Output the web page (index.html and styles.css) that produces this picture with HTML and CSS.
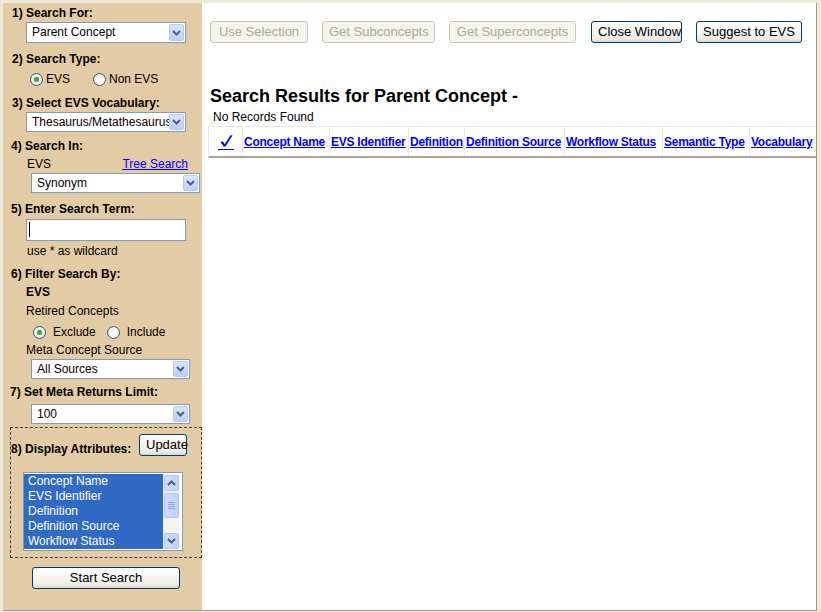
FILE: index.html
```html
<!DOCTYPE html>
<html>
<head>
<meta charset="utf-8">
<title>EVS Search</title>
<link rel="stylesheet" href="styles.css">
</head>
<body>
<div class="frame">
  <aside class="side">
    <div class="lbl lbl-a first">1) Search For:</div>
    <div class="sel sel-a gap2"><span class="sel-text">Parent Concept</span><span class="dd"><svg width="9" height="6" viewBox="0 0 9 6"><path d="M1 1 L4.5 4.5 L8 1" fill="none" stroke="#4d6185" stroke-width="2"/></svg></span></div>

    <div class="lbl lbl-a gap9">2) Search Type:</div>
    <div class="radios radios-1">
      <span class="radio on"></span><span class="rtext">EVS</span>
      <span class="radio r-second"></span><span class="rtext">Non EVS</span>
    </div>

    <div class="lbl lbl-a gap10">3) Select EVS Vocabulary:</div>
    <div class="sel sel-a gap2 h20"><span class="sel-text">Thesaurus/Metathesaurus</span><span class="dd"><svg width="9" height="6" viewBox="0 0 9 6"><path d="M1 1 L4.5 4.5 L8 1" fill="none" stroke="#4d6185" stroke-width="2"/></svg></span></div>

    <div class="lbl lbl-b gap7">4) Search In:</div>
    <div class="inrow">
      <span>EVS</span>
      <a class="link" href="#">Tree Search</a>
    </div>
    <div class="sel sel-c gap2 h20"><span class="sel-text">Synonym</span><span class="dd"><svg width="9" height="6" viewBox="0 0 9 6"><path d="M1 1 L4.5 4.5 L8 1" fill="none" stroke="#4d6185" stroke-width="2"/></svg></span></div>

    <div class="lbl lbl-b gap9">5) Enter Search Term:</div>
    <div class="input"><span class="caret"></span></div>
    <div class="hint">use * as wildcard</div>

    <div class="lbl lbl-b gap9">6) Filter Search By:</div>
    <div class="lbl sub gap4">EVS</div>
    <div class="plain gap5">Retired Concepts</div>
    <div class="radios radios-2">
      <span class="radio on"></span><span class="rtext">Exclude</span>
      <span class="radio r-second2"></span><span class="rtext">Include</span>
    </div>
    <div class="plain gap4">Meta Concept Source</div>
    <div class="sel sel-d gap2 h20"><span class="sel-text">All Sources</span><span class="dd"><svg width="9" height="6" viewBox="0 0 9 6"><path d="M1 1 L4.5 4.5 L8 1" fill="none" stroke="#4d6185" stroke-width="2"/></svg></span></div>

    <div class="lbl lbl-c gap6">7) Set Meta Returns Limit:</div>
    <div class="sel sel-d gap5 h20"><span class="sel-text">100</span><span class="dd"><svg width="9" height="6" viewBox="0 0 9 6"><path d="M1 1 L4.5 4.5 L8 1" fill="none" stroke="#4d6185" stroke-width="2"/></svg></span></div>

    <div class="attrs">
      <div class="attrs-head">
        <span class="lbl attrs-lbl">8) Display Attributes:</span>
        <button class="btn btn-update">Update</button>
      </div>
      <div class="listbox">
        <div class="items">
          <div class="item">Concept Name</div>
          <div class="item">EVS Identifier</div>
          <div class="item">Definition</div>
          <div class="item">Definition Source</div>
          <div class="item">Workflow Status</div>
        </div>
        <div class="sb">
          <span class="sb-btn"><svg width="9" height="6" viewBox="0 0 9 6"><path d="M1 5 L4.5 1.5 L8 5" fill="none" stroke="#4d6185" stroke-width="2"/></svg></span>
          <span class="sb-thumb"><span class="grip"></span><span class="grip"></span><span class="grip"></span><span class="grip"></span></span>
          <span class="sb-track"></span>
          <span class="sb-btn"><svg width="9" height="6" viewBox="0 0 9 6"><path d="M1 1 L4.5 4.5 L8 1" fill="none" stroke="#4d6185" stroke-width="2"/></svg></span>
        </div>
      </div>
    </div>

    <button class="btn btn-start">Start Search</button>
  </aside>

  <main class="main">
    <div class="btnrow">
      <button class="btn btn-off w-use" disabled>Use Selection</button>
      <button class="btn btn-off w-sub" disabled>Get Subconcepts</button>
      <button class="btn btn-off w-sup" disabled>Get Superconcepts</button>
      <button class="btn w-close">Close Window</button>
      <button class="btn w-sug">Suggest to EVS</button>
    </div>
    <h2 class="title">Search Results for Parent Concept -</h2>
    <div class="norec">No Records Found</div>
    <table class="results">
      <colgroup>
        <col class="c0"><col class="c1"><col class="c2"><col class="c3"><col class="c4"><col class="c5"><col class="c6"><col class="c7">
      </colgroup>
      <tr>
        <th class="mid"><a class="chk" href="#"><svg width="16" height="16" viewBox="0 0 16 16"><path d="M2.5 8.2 L4.8 7.2 L6.6 10.2 L12.6 1.2 L14.6 1.2 L7.4 12.6 L5.8 12.6 Z" fill="#0000ff"/><rect x="0" y="15" width="16" height="1" fill="#0000ff"/></svg></a></th>
        <th><a href="#">Concept Name</a></th>
        <th><a href="#">EVS Identifier</a></th>
        <th><a href="#">Definition</a></th>
        <th><a href="#">Definition Source</a></th>
        <th><a href="#">Workflow Status</a></th>
        <th><a href="#">Semantic Type</a></th>
        <th><a href="#">Vocabulary</a></th>
      </tr>
    </table>
  </main>
</div>
</body>
</html>
```

FILE: styles.css
```css
html, body {
  margin: 0;
  padding: 0;
  background: #ece9d8;
  overflow: hidden;
}
body {
  font: 12px/14px "Liberation Sans", Arial, sans-serif;
  color: #000;
}
.frame {
  display: flex;
  width: 813px;
  height: 607px;
  margin: 3px 0 0 3px;
  border-right: 1px solid #9b9a94;
  border-bottom: 1px solid #9b9a94;
}
.side {
  flex: none;
  width: 199px;
  background: #e3cca5;
  display: flex;
  flex-direction: column;
  align-items: flex-start;
}
.main {
  flex: 1;
  background: #fff;
  overflow: hidden;
  padding: 18px 0 0 6px;
  min-width: 0;
}

/* labels */
.lbl { font-weight: bold; line-height: 14px; white-space: nowrap; }
.lbl-a { margin-left: 9px; }
.lbl-b { margin-left: 8px; }
.lbl-c { margin-left: 7px; }
.first { margin-top: 3px; }
.sub { margin-left: 23px; }
.plain { margin-left: 23px; line-height: 14px; }
.gap2 { margin-top: 2px; }
.gap4 { margin-top: 4px; }
.gap5 { margin-top: 5px; }
.gap6 { margin-top: 6px; }
.gap7 { margin-top: 7px; }
.gap9 { margin-top: 9px; }
.gap10 { margin-top: 10px; }

/* select boxes */
.sel {
  box-sizing: border-box;
  display: flex;
  align-items: stretch;
  height: 21px;
  background: #fff;
  border: 1px solid #7f9db9;
  padding: 1px;
  overflow: hidden;
}
.sel.h20 { height: 20px; }
.sel-a { margin-left: 23px; width: 160px; }
.sel-c { margin-left: 28px; width: 169px; }
.sel-d { margin-left: 28px; width: 159px; }
.sel-text {
  flex: 1;
  min-width: 0;
  padding-left: 4px;
  line-height: 17px;
  white-space: nowrap;
  overflow: hidden;
}
.dd {
  flex: none;
  width: 15px;
  box-sizing: border-box;
  border: 1px solid #b7c9f2;
  border-radius: 2px;
  background: linear-gradient(#dbe6fe, #bccff9);
  display: flex;
  align-items: center;
  justify-content: center;
}

/* radios */
.radios {
  display: flex;
  align-items: center;
  height: 14px;
}
.radios-1 { margin-top: 6px; margin-left: 27px; }
.radios-2 { margin-top: 7px; margin-left: 30px; }
.radio {
  flex: none;
  box-sizing: border-box;
  width: 13px;
  height: 13px;
  border-radius: 50%;
  border: 1px solid #2a5a8c;
  background: radial-gradient(circle at 60% 60%, #ffffff 30%, #dedbd0 100%);
}
.radio.on {
  background: radial-gradient(circle, #2f9f2f 0, #45b845 2.2px, #ffffff 3.2px, #f4f3ee 60%, #d8d5ca 100%);
}
.radios-1 .rtext { margin-left: 3px; }
.radios-1 .r-second { margin-left: 23px; }
.radios-2 .rtext { margin-left: 7px; }
.radios-2 .r-second2 { margin-left: 11px; }

/* search in */
.inrow {
  align-self: stretch;
  display: flex;
  justify-content: space-between;
  margin-top: 4px;
  padding: 0 14px 0 24px;
  line-height: 14px;
}
.link { color: #0000ff; text-decoration: underline; }

/* input */
.input {
  box-sizing: border-box;
  margin: 3px 0 0 23px;
  width: 160px;
  height: 22px;
  background: #fff;
  border: 1px solid #7f9db9;
  padding: 2px 0 0 2px;
}
.caret {
  display: block;
  width: 1px;
  height: 15px;
  background: #000;
}
.hint { margin: 3px 0 0 24px; line-height: 14px; }

/* display attributes */
.attrs {
  box-sizing: border-box;
  align-self: stretch;
  margin: 3px 0 0 7px;
  height: 131px;
  border: 1px dashed #3b3f55;
  padding-top: 6px;
}
.attrs-head {
  display: flex;
  align-items: flex-start;
}
.attrs-lbl { margin-top: 8px; }
.btn-update {
  margin-left: auto;
  margin-right: 14px;
  width: 48px;
  padding: 0;
}
.listbox {
  box-sizing: border-box;
  display: flex;
  margin: 16px 0 0 12px;
  width: 160px;
  height: 79px;
  border: 1px solid #7f9db9;
  padding: 1px 2px 1px 0;
  background: #fff;
}
.items {
  flex: 1;
  background: #316ac5;
  color: #fff;
}
.item {
  line-height: 15px;
  padding-left: 4px;
  white-space: nowrap;
}
.sb {
  flex: none;
  width: 17px;
  display: flex;
  flex-direction: column;
  background: #f4f3ee;
}
.sb-btn, .sb-thumb {
  box-sizing: border-box;
  display: flex;
  align-items: center;
  justify-content: center;
  margin: 1px 1px 0 1px;
  border: 1px solid #b7c9f2;
  border-radius: 2px;
  background: linear-gradient(90deg, #cddcfd, #c0d2fa);
}
.sb-btn { height: 16px; }
.sb-thumb {
  margin-top: 2px;
  height: 25px;
  flex-direction: column;
  gap: 1px;
}
.grip {
  display: block;
  width: 7px;
  height: 1px;
  background: #8ca7e0;
}
.sb-track { flex: 1; }

/* buttons */
.btn {
  box-sizing: border-box;
  height: 22px;
  padding: 0 6px;
  border: 1px solid #003c74;
  border-radius: 3px;
  background: linear-gradient(#ffffff 0%, #f7f6f1 40%, #ecebe4 85%, #d7d3c8 100%);
  font: 13px/18px "Liberation Sans", Arial, sans-serif;
  color: #000;
  white-space: nowrap;
}
.btn-off {
  border-color: #c9c7ba;
  color: #aca899;
  background: #f5f4ea;
}
.btn-start {
  margin: 9px 0 0 29px;
  width: 148px;
}

.btnrow {
  display: flex;
  gap: 14px;
  margin-left: 2px;
}
.w-use { width: 98px; }
.w-sub { width: 113px; }
.w-sup { width: 127px; }
.w-close { width: 91px; margin-left: 1px; }
.w-sug { width: 106px; }

.title {
  margin: 43px 0 0 2px;
  font: bold 18px/21px "Liberation Sans", Arial, sans-serif;
  white-space: nowrap;
}
.norec {
  margin: 3px 0 0 5px;
  line-height: 14px;
}

/* results table */
.results {
  table-layout: fixed;
  width: 616px;
  margin-top: 2px;
  border-collapse: separate;
  border-spacing: 0;
  border-top: 1px solid #ece9d8;
  border-left: 1px solid #ece9d8;
  border-bottom: 2px solid #aca899;
  white-space: nowrap;
}
.results th {
  height: 29px;
  padding: 0 1px;
  border-right: 1px solid #ece9d8;
  font-weight: bold;
  text-align: left;
  vertical-align: middle;
  letter-spacing: -0.25px;
}
.results th a { color: #0000ff; text-decoration: underline; }
.results th.mid { text-align: center; }
.c0 { width: 34px; }
.c1 { width: 87px; }
.c2 { width: 79px; }
.c3 { width: 56px; }
.c4 { width: 100px; }
.c5 { width: 98px; }
.c6 { width: 87px; }
.c7 { width: 75px; }
.chk { display: inline-block; vertical-align: middle; }
.chk svg { display: block; }
```
